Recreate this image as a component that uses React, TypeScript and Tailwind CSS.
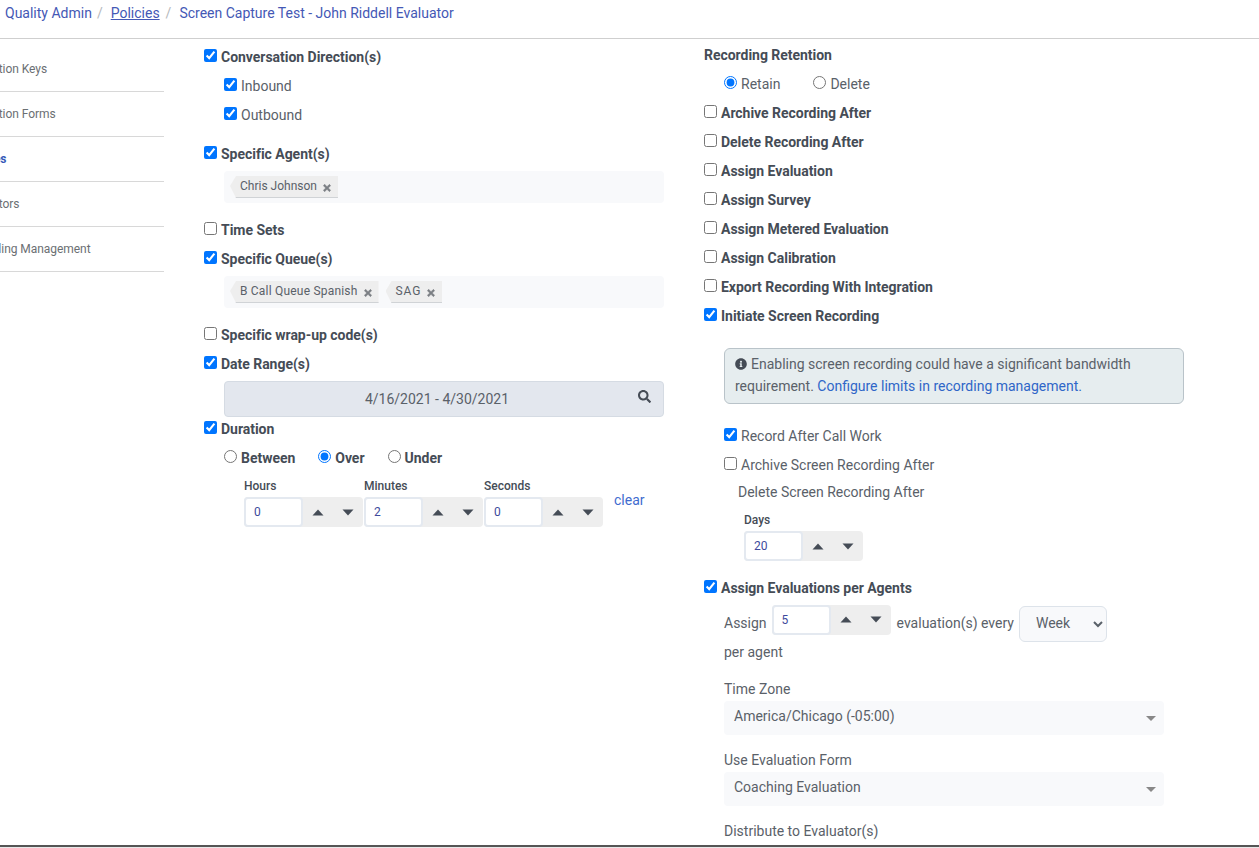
import { FaInfoCircle, FaSearch, FaTimes } from "react-icons/fa";

type CheckRowProps = {
  label: string;
  checked?: boolean;
  bold?: boolean;
  className?: string;
};

function CheckRow({ label, checked = false, bold = true, className = "" }: CheckRowProps) {
  return (
    <label className={`flex h-[29px] items-center gap-[4px] ${bold ? "font-bold tracking-[-0.03px] text-[#454c56]" : "text-[#5a6169]"} ${className}`}>
      <input type="checkbox" defaultChecked={checked} className="m-0 -mt-[3px] h-[13px] w-[13px]" />
      <span>{label}</span>
    </label>
  );
}

function RadioItem({ label, checked = false, bold = false, name }: { label: string; checked?: boolean; bold?: boolean; name: string }) {
  return (
    <label className={`flex items-center gap-[4px] ${bold ? "font-bold tracking-[-0.03px] text-[#454c56]" : "text-[#5a6169]"}`}>
      <input type="radio" name={name} defaultChecked={checked} className="m-0 -mt-[3px] h-[13px] w-[13px]" />
      <span>{label}</span>
    </label>
  );
}

function Tag({ label, className = "" }: { label: string; className?: string }) {
  return (
    <span className={`flex h-[22px] items-center border-b border-[#d0d3d6] bg-[#eeeeee] pr-[6px] pl-[10px] text-xs text-[#5a6169] [clip-path:polygon(6px_0,100%_0,100%_100%,6px_100%,0_45%)] ${className}`}>
      <span className="-mt-[2px]">{label}</span>
      <FaTimes className="mt-[3px] ml-[5px] h-[10px] w-[10px] stroke-current stroke-[30] text-[#7b7f84]" />
    </span>
  );
}

function Caret({ up = false, color = "#454c56" }: { up?: boolean; color?: string }) {
  return (
    <svg width="12" height="7" viewBox="0 0 12 7" aria-hidden>
      <path d={up ? "M6 0.5 L11.5 6.5 H0.5 Z" : "M0.5 0.5 H11.5 L6 6.5 Z"} fill={color} />
    </svg>
  );
}

function Spinner({ value, className = "" }: { value: string; className?: string }) {
  return (
    <div className={`flex h-[30px] w-[119px] shrink-0 rounded-[4px] bg-[#eeeeee] ${className}`}>
      <div className="flex w-[59px] items-center rounded-[4px] border-2 border-[#e4e9f0] bg-white pl-2 text-xs text-[#3d4a9c]">
        {value}
      </div>
      <div className="flex flex-1 items-center justify-around">
        <Caret up />
        <Caret />
      </div>
    </div>
  );
}

function SelectBox({ value }: { value: string }) {
  return (
    <div className="flex h-[34px] w-[440px] items-center justify-between rounded-[4px] bg-[#f8f9fb] pr-[8px] pl-[10px] text-[#5a6169]">
      <span className="-mt-[4px]">{value}</span>
      <svg width="10" height="5" viewBox="0 0 10 5" aria-hidden>
        <path d="M0 0 H10 L5 5 Z" fill="#888888" />
      </svg>
    </div>
  );
}

const sideItems = [
  { label: "Evaluation Keys" },
  { label: "Evaluation Forms" },
  { label: "Policies", active: true },
  { label: "Evaluators" },
  { label: "Recording Management" },
];

export default function App() {
  return (
    <div className="relative flex h-[848px] w-[1259px] flex-col overflow-hidden bg-white font-['Roboto',sans-serif] text-sm text-[#5a6169]">
      <nav className="flex h-[39px] shrink-0 border-b border-[#cfcfcf] pt-[3px] pl-[5px] text-[#4458b5]">
        <a className="leading-5">Quality Admin</a>
        <span className="mr-[6px] ml-[5px] leading-5 text-[#b5b9bd]">/</span>
        <a className="ml-[2px] leading-5 underline">Policies</a>
        <span className="mx-[6px] leading-5 text-[#b5b9bd]">/</span>
        <a className="ml-[2px] leading-5">Screen Capture Test - John Riddell Evaluator</a>
      </nav>

      <div className="flex flex-1">
        <aside className="w-[164px] shrink-0 overflow-hidden pt-[8px]">
          <ul className="-ml-[36px] w-[200px] text-xs tracking-[-0.05px] text-[#6b6f73]">
            {sideItems.map((item) => (
              <li key={item.label} className={`flex h-[45px] items-center border-b border-[#d8d8d8] ${item.active ? "font-bold text-[#3558b8]" : ""}`}>
                {item.label}
              </li>
            ))}
          </ul>
        </aside>

        <section className="ml-[40px] w-[460px] shrink-0 pt-[3px]">
          <CheckRow label="Conversation Direction(s)" checked />
          <div className="pl-[20px]">
            <CheckRow label="Inbound" checked bold={false} />
            <CheckRow label="Outbound" checked bold={false} />
          </div>
          <CheckRow label="Specific Agent(s)" checked className="mt-[10px]" />
          <div className="mt-[3px] ml-[20px] flex h-[32px] items-center gap-[7px] rounded-[4px] bg-[#f8f9fb] pl-[6px]">
            <Tag label="Chris Johnson" />
          </div>
          <CheckRow label="Time Sets" className="mt-[12px]" />
          <CheckRow label="Specific Queue(s)" checked />
          <div className="mt-[3px] ml-[20px] flex h-[32px] items-center gap-[7px] rounded-[4px] bg-[#f8f9fb] pl-[6px]">
            <Tag label="B Call Queue Spanish" className="tracking-[0.2px]" />
            <Tag label="SAG" className="tracking-[0.9px]" />
          </div>
          <CheckRow label="Specific wrap-up code(s)" className="mt-[12px]" />
          <CheckRow label="Date Range(s)" checked />
          <div className="relative mt-[3px] ml-[20px] flex h-[36px] items-center justify-center rounded-[4px] border border-[#d5dbe3] bg-[#e3e7ee] pr-[14px]">
            4/16/2021 - 4/30/2021
            <FaSearch className="absolute top-[8px] right-[12px] h-[13px] w-[13px] text-[#454c56]" />
          </div>
          <CheckRow label="Duration" checked className="!h-[24px]" />
          <div className="mt-[2px] ml-[20px] flex h-[29px] items-center">
            <RadioItem name="duration" label="Between" bold />
            <span className="w-[23px]" />
            <RadioItem name="duration" label="Over" checked bold />
            <span className="w-[23px]" />
            <RadioItem name="duration" label="Under" bold />
          </div>
          <div className="mt-[6px] ml-[40px] flex">
            {[
              ["Hours", "0"],
              ["Minutes", "2"],
              ["Seconds", "0"],
            ].map(([unit, value]) => (
              <div key={unit} className="w-[120px]">
                <div className="mb-[3px] h-[16px] text-xs leading-4 font-medium text-[#454c56]">{unit}</div>
                <Spinner value={value} />
              </div>
            ))}
            <a className="mt-[12px] ml-[10px] text-[#3f6ccf]">clear</a>
          </div>
        </section>

        <section className="ml-[40px] flex-1 pt-[4px]">
          <div className="flex h-[24px] items-center font-bold tracking-[-0.03px] text-[#454c56]">Recording Retention</div>
          <div className="mt-[2px] ml-[20px] flex h-[29px] items-center">
            <RadioItem name="retention" label="Retain" checked />
            <span className="w-[33px]" />
            <RadioItem name="retention" label="Delete" />
          </div>
          <CheckRow label="Archive Recording After" />
          <CheckRow label="Delete Recording After" />
          <CheckRow label="Assign Evaluation" />
          <CheckRow label="Assign Survey" />
          <CheckRow label="Assign Metered Evaluation" />
          <CheckRow label="Assign Calibration" />
          <CheckRow label="Export Recording With Integration" />
          <CheckRow label="Initiate Screen Recording" checked />

          <div className="mt-[18px] ml-[20px] h-[56px] w-[460px] rounded-[6px] border border-[#b9c3c9] bg-[#e6edef] px-[10px] py-[4px] leading-[22px]">
            <FaInfoCircle className="mr-[4px] inline h-[12px] w-[12px] -translate-y-[1px] text-[#454c56]" />
            Enabling screen recording could have a significant bandwidth requirement.{" "}
            <a className="text-[#2f66c8]">Configure limits in recording management.</a>
          </div>

          <div className="mt-[17px] ml-[20px]">
            <CheckRow label="Record After Call Work" checked bold={false} />
            <CheckRow label="Archive Screen Recording After" bold={false} />
            <div className="mt-[1px] ml-[14px] h-[25px] leading-[25px]">Delete Screen Recording After</div>
            <div className="mt-[7px] ml-[20px] h-[16px] text-xs leading-4 font-medium text-[#454c56]">Days</div>
            <Spinner value="20" className="mt-[3px] ml-[20px]" />
          </div>

          <CheckRow label="Assign Evaluations per Agents" checked className="mt-[12px]" />
          <div className="ml-[20px]">
            <div className="mt-[3px] flex h-[36px] items-center">
              <span>Assign</span>
              <Spinner value="5" className="mt-[-7px] ml-[5px]" />
              <span className="ml-[6px]">evaluation(s) every</span>
              <select className="mt-[2px] ml-[5px] h-[36px] w-[88px] rounded-[6px] border border-[#dde3ea] bg-[#f8f9fb] pb-[2px] pl-[12px]">
                <option>Week</option>
              </select>
            </div>
            <div className="mt-[1px] h-[20px] leading-5">per agent</div>
            <div className="mt-[17px] h-[20px] leading-5">Time Zone</div>
            <div className="mt-[2px]">
              <SelectBox value="America/Chicago (-05:00)" />
            </div>
            <div className="mt-[15px] h-[20px] leading-5">Use Evaluation Form</div>
            <div className="mt-[2px]">
              <SelectBox value="Coaching Evaluation" />
            </div>
            <div className="mt-[15px] h-[20px] leading-5">Distribute to Evaluator(s)</div>
          </div>
        </section>
      </div>

      <div className="absolute right-0 bottom-0 left-0 h-[3px] border-t-2 border-[#555555] bg-[#e8e8e8]" />
    </div>
  );
}
